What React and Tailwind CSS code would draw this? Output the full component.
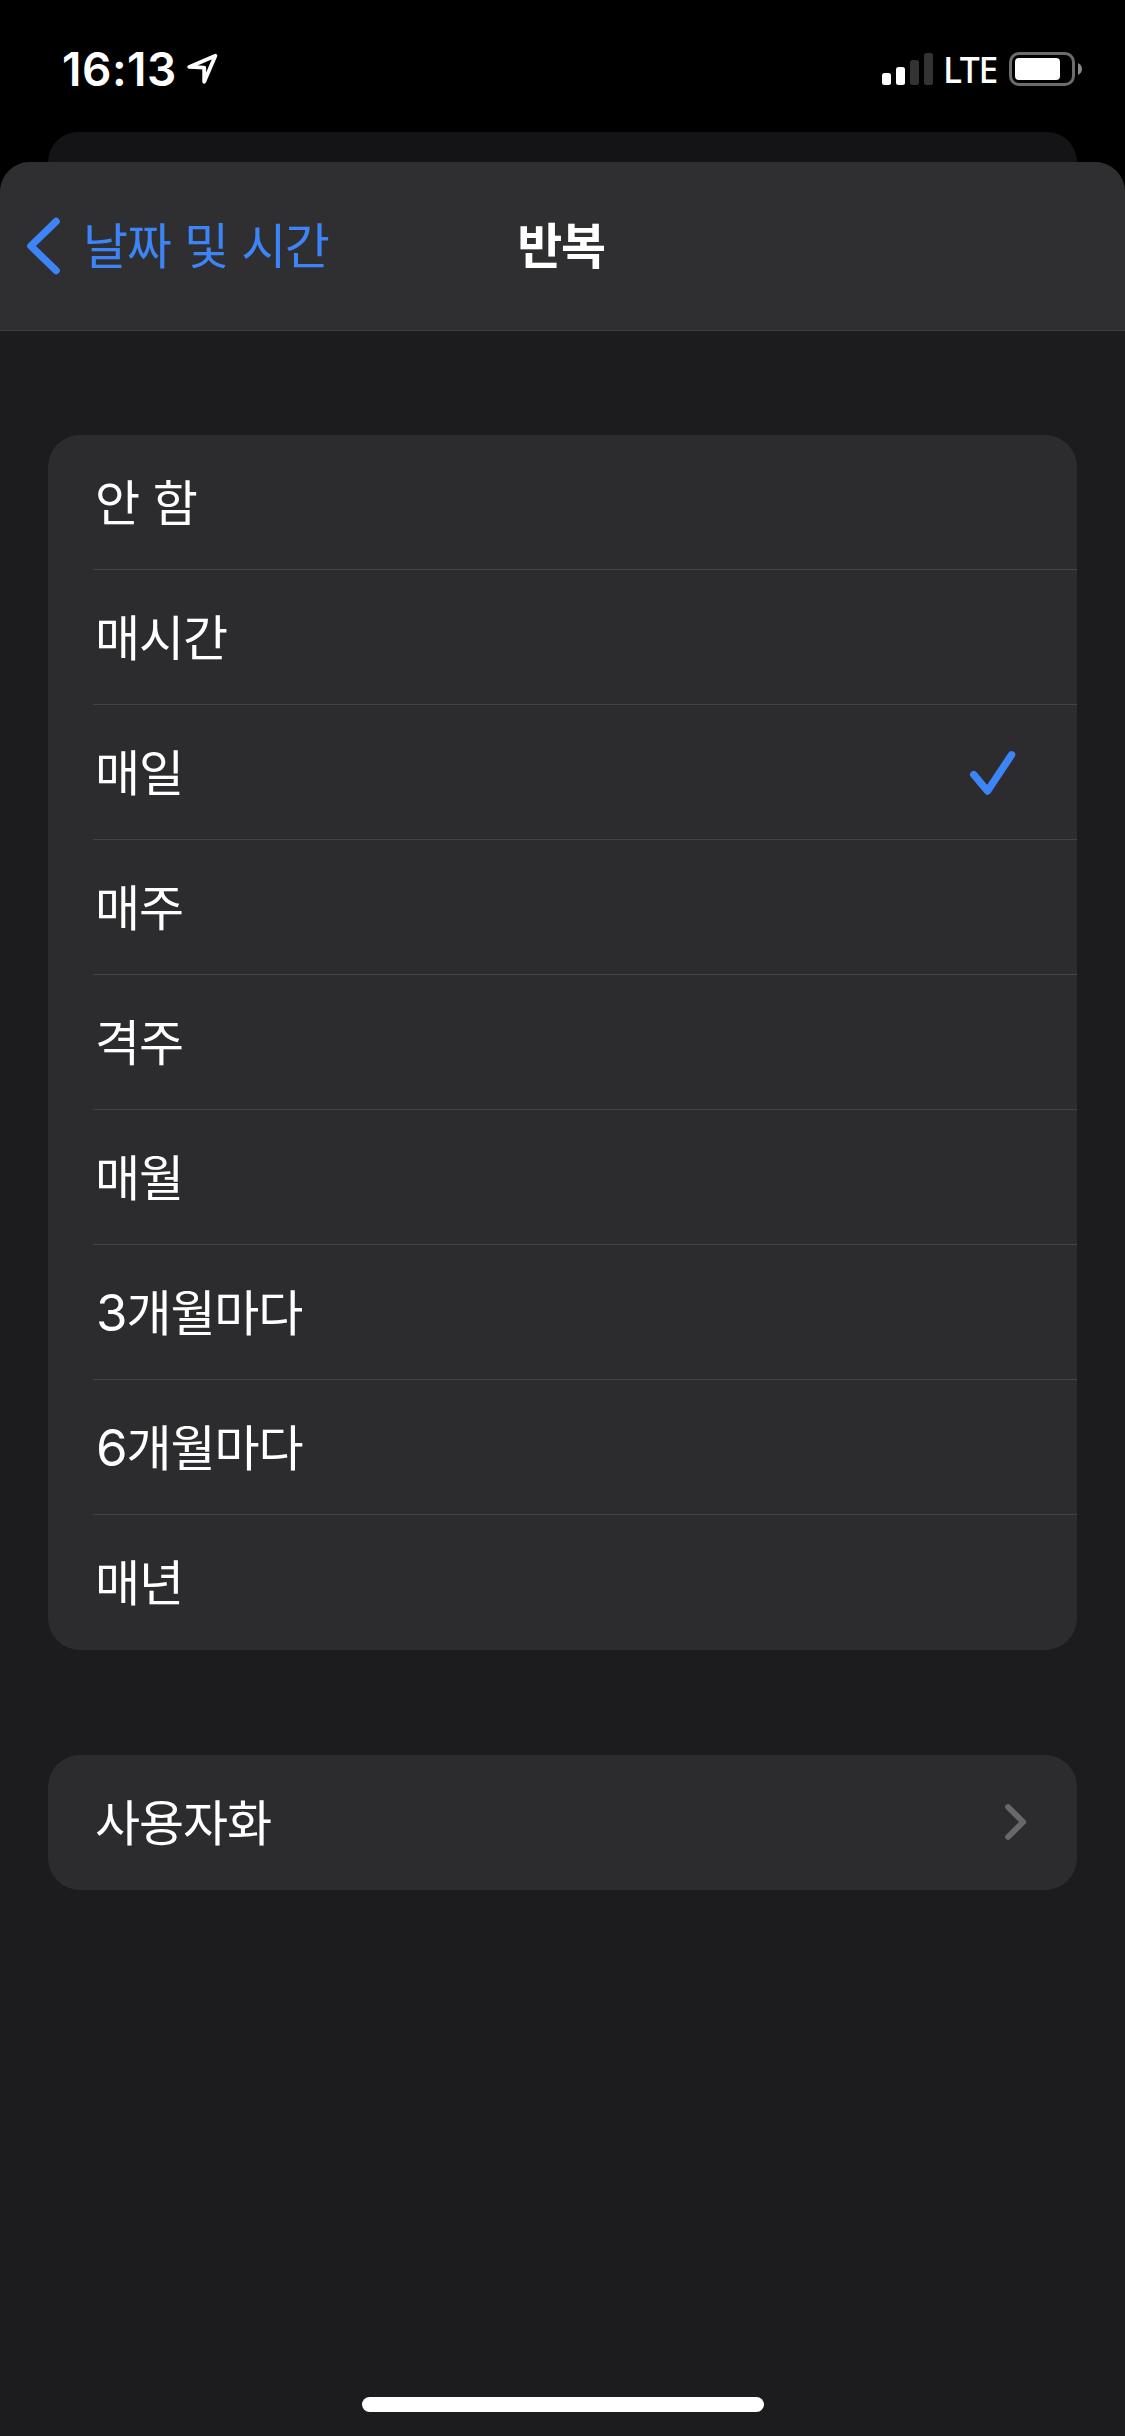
const OPTIONS = [
  { label: '안 함' },
  { label: '매시간' },
  { label: '매일', selected: true },
  { label: '매주' },
  { label: '격주' },
  { label: '매월' },
  { digit: '3', label: '개월마다' },
  { digit: '6', label: '개월마다' },
  { label: '매년' },
];

function StatusBar() {
  return (
    <div className="flex h-[132px] items-start justify-between pl-[62px] pr-[43px] text-white">
      <div className="flex pt-[42px]">
        <span className="w-[122px] whitespace-nowrap font-['Inter',sans-serif] text-[46px] font-semibold leading-[54px] tracking-[0.5px]">
          16:13
        </span>
        <svg className="mt-[10px] h-[34px] w-[36px]" viewBox="184 52 36 34" fill="none" stroke="white" strokeWidth="3.8" strokeLinejoin="round">
          <path d="M215.4 55.7 L189.2 66.9 L204.2 67.6 L204.2 81.8 Z" />
        </svg>
      </div>
      <div className="flex">
        <svg className="mt-[53px] h-8 w-[51px]" viewBox="0 0 51 32">
          <rect x="0" y="20" width="9" height="12" rx="2.5" fill="white" />
          <rect x="14" y="14" width="9" height="18" rx="2.5" fill="white" />
          <rect x="28" y="7" width="9" height="25" rx="2.5" fill="#333333" />
          <rect x="42" y="0" width="9" height="32" rx="2.5" fill="#333333" />
        </svg>
        <span className="ml-[10px] mt-[45px] w-[66px] whitespace-nowrap font-['Noto_Sans',sans-serif] text-[35.5px] font-medium leading-[48px] tracking-[-1.4px]">
          LTE
        </span>
        <svg className="mt-[52px] h-[34px] w-[73px]" viewBox="0 0 73 34">
          <rect x="1.5" y="1.5" width="63" height="31" rx="8.5" fill="none" stroke="#6c6c6c" strokeWidth="3" />
          <rect x="6" y="6" width="45" height="22" rx="4" fill="white" />
          <path d="M69 11 C74.3 13.5 74.3 20.5 69 23 Z" fill="#8a8a8a" />
        </svg>
      </div>
    </div>
  );
}

function NavigationBar() {
  return (
    <header className="grid h-[169px] grid-cols-3 border-b border-[#3d3d3f] bg-[#2f2f31] pt-[46px]">
      <button className="flex h-[70px] items-center justify-start pl-[26px] text-[#3d84f7]">
        <svg className="mt-[6px] h-[58px] w-[35px]" viewBox="0 0 35 58" fill="none" stroke="currentColor" strokeWidth="7.2" strokeLinecap="round" strokeLinejoin="round">
          <path d="M30.2 4.4 L4.8 29 L30.2 53.6" />
        </svg>
        <span className="ml-[22px] whitespace-nowrap text-[49px] leading-[70px] tracking-[-1.4px] [word-spacing:4px]">날짜 및 시간</span>
      </button>
      <h1 className="pr-[3px] text-center text-[49px] font-bold leading-[70px] tracking-[-1.4px]">반복</h1>
    </header>
  );
}

function OptionRow({ digit, label, selected }) {
  return (
    <li className="group flex h-[135px] pl-[45px]">
      <div className="flex flex-1 items-center justify-between border-b border-[#434345] pr-[60px] group-last:border-b-0">
        <span className="whitespace-nowrap pb-[5px] pl-[2px] text-[49px] leading-[70px] tracking-[-1.1px] [word-spacing:4px]">
          {digit && <span className="pl-[1px] font-['Inter',sans-serif] text-[51px] leading-none">{digit}</span>}
          {label}
        </span>
        {selected && (
          <svg className="mt-[2px] h-[46px] w-[48px]" viewBox="0 0 48 46" fill="none" stroke="#3d84f7" strokeWidth="7.4" strokeLinecap="round" strokeLinejoin="round">
            <path d="M4.8 24.6 L18.5 41 L42.6 4.8" />
          </svg>
        )}
      </div>
    </li>
  );
}

export default function App() {
  return (
    <div className="flex h-[2436px] w-[1125px] flex-col overflow-hidden bg-black font-['Noto_Sans_CJK_KR',sans-serif] text-white">
      <StatusBar />
      <div className="mx-[48px] h-[70px] rounded-t-[30px] bg-[#141416]" />
      <main className="relative -mt-[40px] flex flex-1 flex-col overflow-hidden rounded-t-[30px] bg-[#1c1c1e]">
        <NavigationBar />
        <ul className="mx-[48px] mt-[104px] overflow-hidden rounded-[32px] bg-[#2c2c2e]">
          {OPTIONS.map((option, i) => (
            <OptionRow key={i} {...option} />
          ))}
        </ul>
        <button className="mx-[48px] mt-[105px] flex h-[135px] items-center justify-between rounded-[32px] bg-[#2c2c2e] pl-[47px] pr-[49px]">
          <span className="whitespace-nowrap pb-[6px] text-[49px] leading-[70px] tracking-[-1.1px]">사용자화</span>
          <svg className="mb-[2px] h-[38px] w-[24px]" viewBox="0 0 24 38" fill="none" stroke="#68686c" strokeWidth="5.8" strokeLinecap="round" strokeLinejoin="round">
            <path d="M4 4 L19.2 19 L4 34" />
          </svg>
        </button>
        <div className="mx-auto mb-[24px] mt-auto h-[15px] w-[402px] rounded-full bg-white" />
      </main>
    </div>
  );
}
